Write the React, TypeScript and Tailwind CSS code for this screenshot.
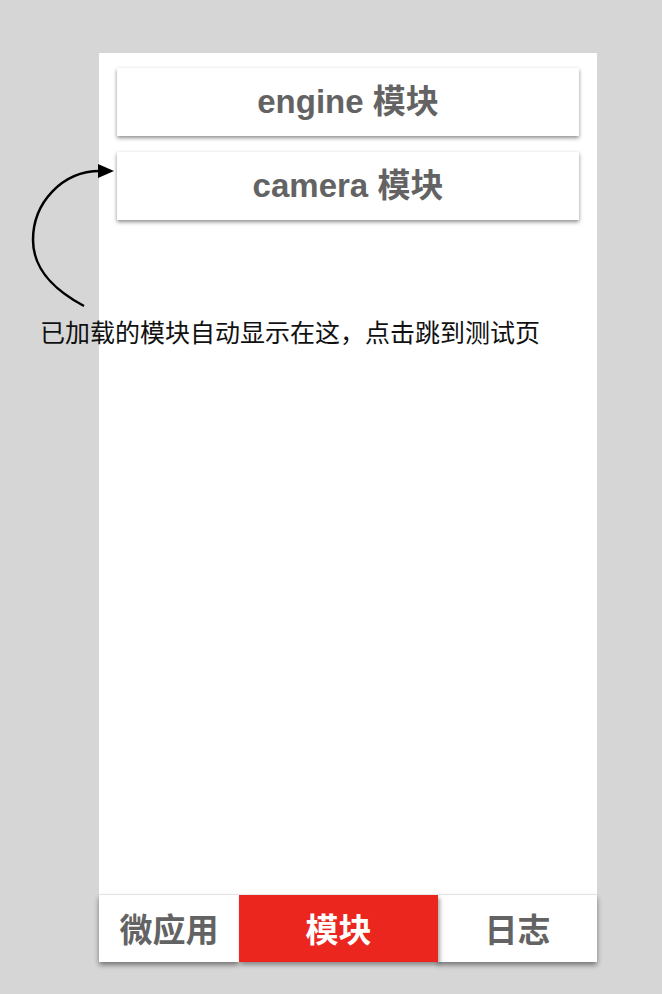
const modules = ["engine", "camera"];

const tabs = [
  { label: "微应用", width: "w-[140px]", active: false },
  { label: "模块", width: "w-[199px]", active: true },
  { label: "日志", width: "flex-1", active: false },
];

function CurvedArrow() {
  return (
    <svg
      className="absolute left-0 top-0"
      width="130"
      height="320"
      viewBox="0 0 130 320"
      fill="none"
    >
      <path
        d="M 84 306 C 58 292, 33 272, 33 240 C 33 203, 62 171, 100 171"
        stroke="#000"
        strokeWidth="2.5"
      />
      <polygon points="98,164 114,171 98,178" fill="#000" />
    </svg>
  );
}

export default function App() {
  return (
    <div
      className="relative min-h-[994px] w-full bg-[#d6d6d6] pt-[53px] pl-[99px]"
      style={{ fontFamily: "'Liberation Sans', 'Noto Sans CJK SC', sans-serif" }}
    >
      <div className="flex h-[909px] w-[498px] flex-col bg-white">
        <div className="flex flex-col gap-4 px-[18px] pt-[15px]">
          {modules.map((m) => (
            <button
              key={m}
              className="flex h-[68px] items-center justify-center bg-white text-[33px] font-semibold text-[#636363] shadow-[0_2px_4px_rgba(0,0,0,0.45)]"
            >
              {m} 模块
            </button>
          ))}
        </div>
        <div className="flex-1" />
        <div className="flex h-[68px] border-t border-[#ececec]">
          {tabs.map((t) => (
            <div
              key={t.label}
              className={
                t.active
                  ? `${t.width} z-10 flex items-center justify-center bg-[#eb261f] text-[33px] font-bold text-white shadow-[2px_3px_4px_rgba(0,0,0,0.35)]`
                  : `${t.width} flex items-center justify-center bg-white text-[33px] font-bold text-[#636363] shadow-[0_3px_5px_rgba(0,0,0,0.45)]`
              }
              style={{ fontFamily: "'Noto Sans CJK SC', sans-serif" }}
            >
              {t.label}
            </div>
          ))}
        </div>
      </div>

      <CurvedArrow />
      <div
        className="absolute left-[40px] top-[315px] text-[25px] leading-[32px] text-[#111]"
        style={{ fontFamily: "'Noto Sans CJK SC', sans-serif" }}
      >
        已加载的模块自动显示在这，点击跳到测试页
      </div>
    </div>
  );
}
